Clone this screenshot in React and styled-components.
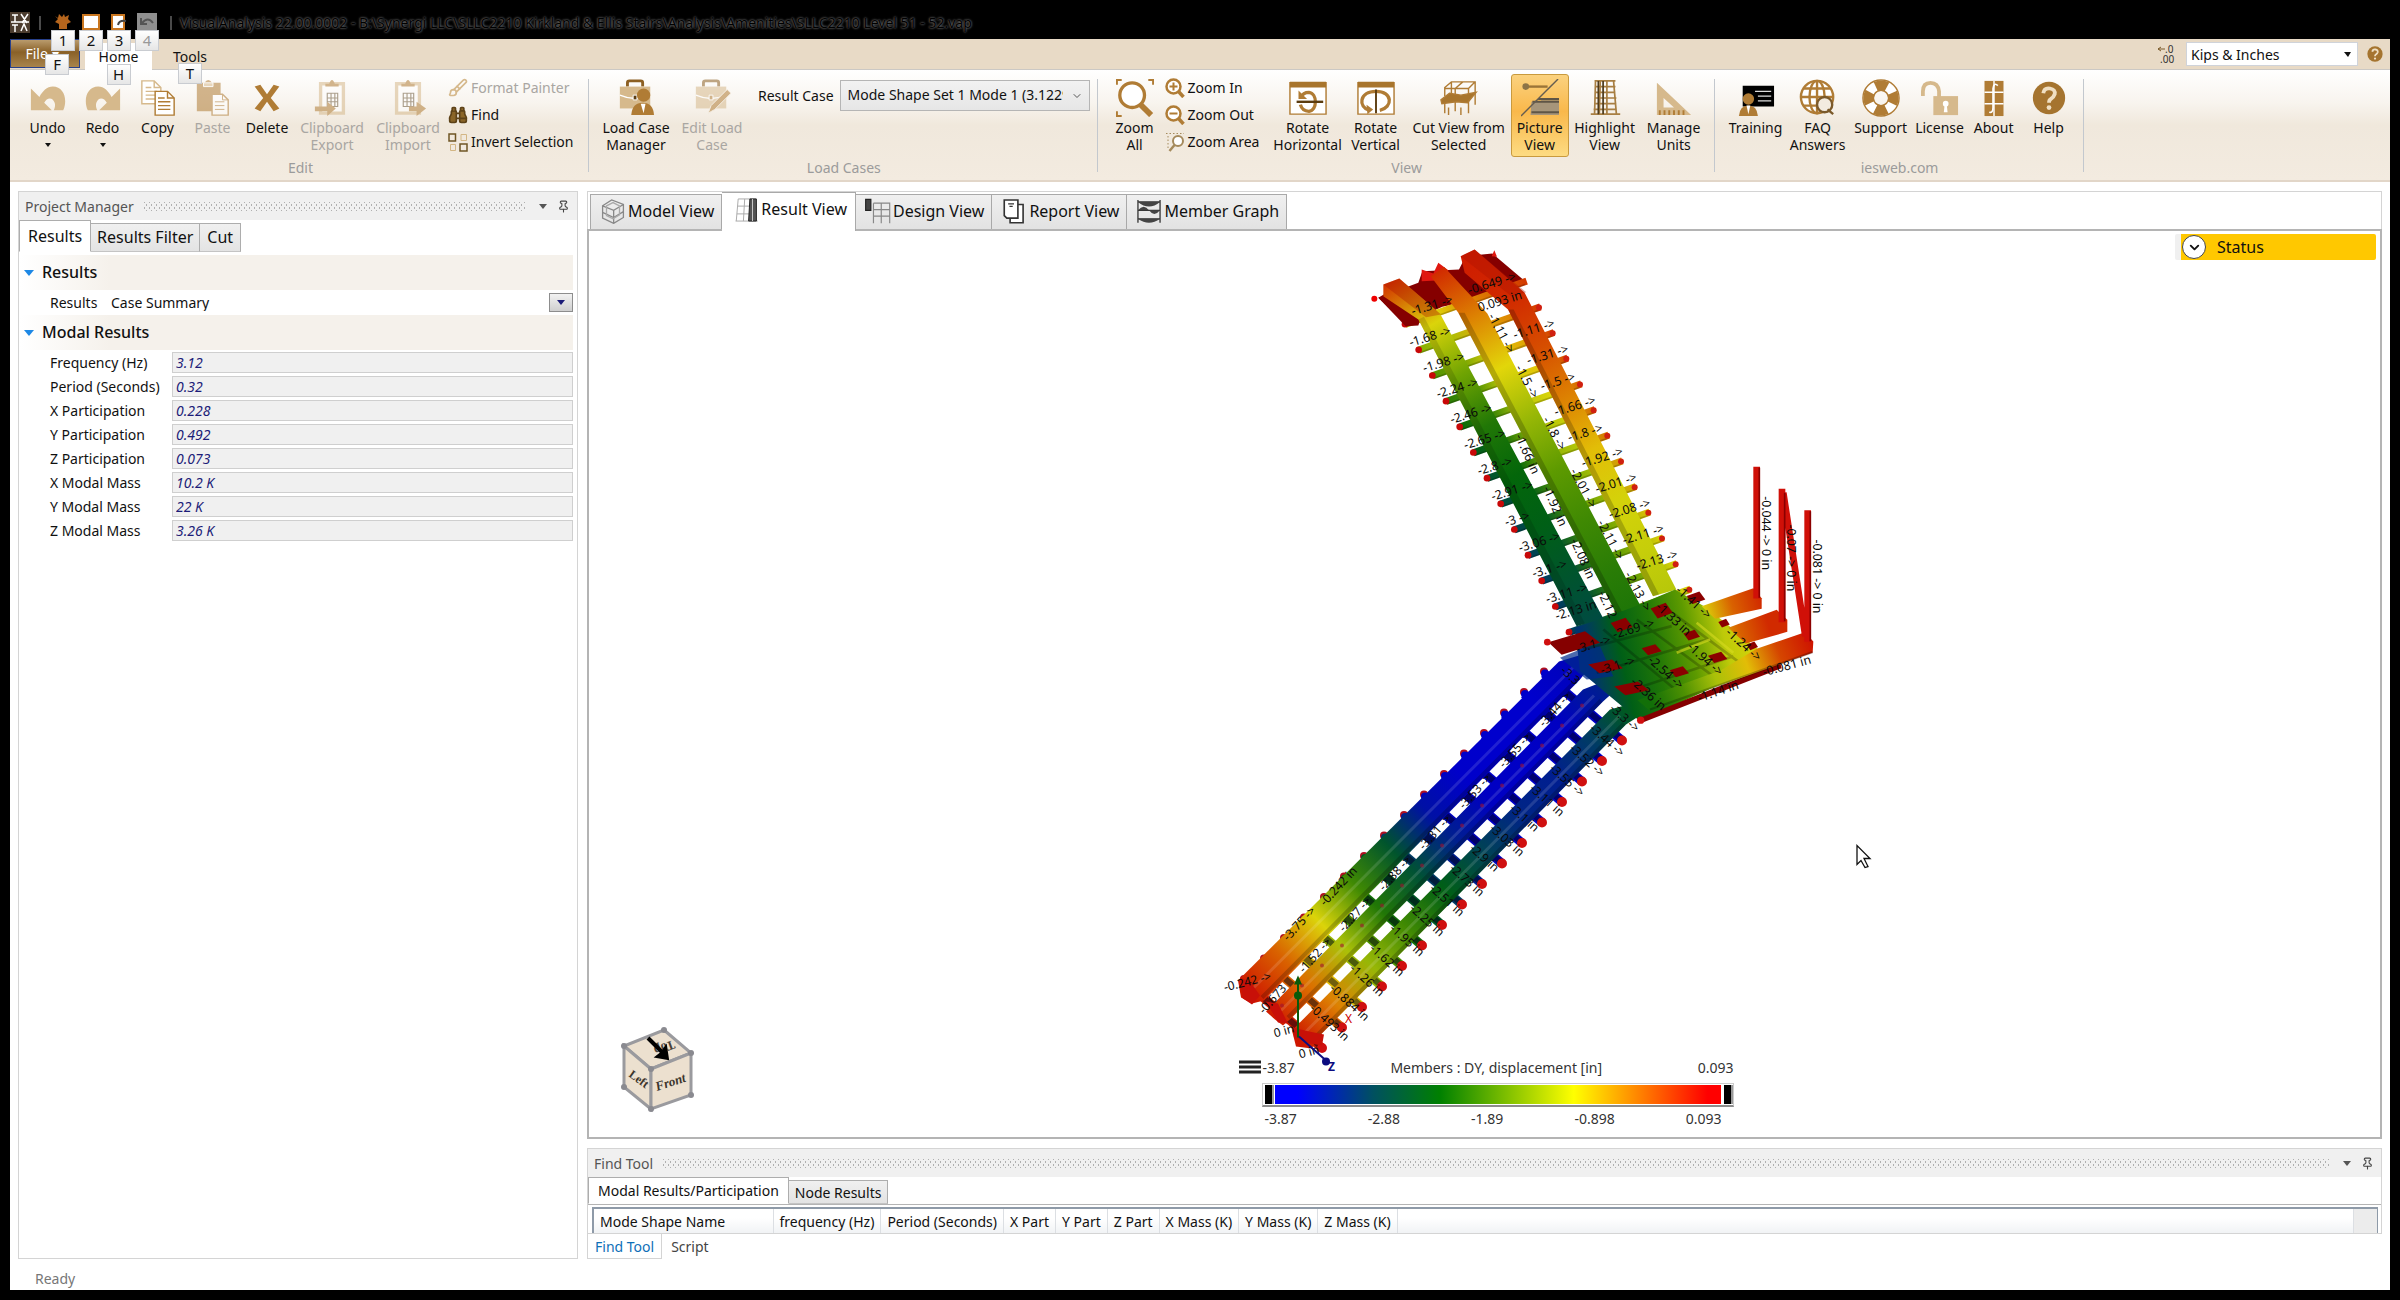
import React, { useState } from 'react'
import styled, { createGlobalStyle, css } from 'styled-components';
import { Binoculars, Brush, ChevronDown, Pin } from 'lucide-react';

const GlobalStyle = createGlobalStyle`
  * { box-sizing: border-box; }
  body { margin: 0; background: #000; }
  body, button, select, input, table {
    font-family: "Noto Sans", "Open Sans", sans-serif;
    font-size: 14px;
    line-height: 17px;
    color: #111;
  }
  button, select, input { margin: 0; padding: 0; border: 0; background: none; }
  svg { display: block; flex: none; }
`

/* ---------- window frame ---------- */

const Window = styled.div`
  display: flex;
  flex-direction: column;
  min-height: 100vh;
  padding: 0 10px 10px;
  background: #000;
`
const TitleBar = styled.header`
  display: flex;
  align-items: center;
  height: 39px;
  padding-top: 6px;
`
const TitleText = styled.h1`
  margin: 0;
  font-size: 14px;
  font-weight: 400;
  line-height: 24px;
  color: #000;
  text-shadow: 0 0 2px #8a8a8a, 0 0 3px #555;
  white-space: nowrap;
`
const Divider = styled.span`
  width: 2px;
  height: 14px;
  margin: 0 8px 0 9px;
  background: #4a4a4a;
`
const QuickAccess = styled.div`
  display: flex;
  align-self: flex-start;
  padding-top: 5px;
`
const QuickButton = styled.button`
  position: relative;
  display: flex;
  justify-content: center;
  width: 28px;
  height: 20px;
  padding-top: 2px;
`
const KeyTip = styled.kbd`
  position: absolute;
  z-index: 5;
  top: ${p => p.$top}px;
  left: ${p => (p.$right ? 68 : 50)}%;
  width: 24px;
  height: 21px;
  margin-left: -12px;
  border: 1px solid #c9ccd1;
  background: linear-gradient(#fff, #e6e6e6);
  color: ${p => (p.$dim ? '#999' : '#111')};
  font: 15px/19px "Noto Sans", sans-serif;
  text-align: center;
`

/* ---------- ribbon ---------- */

const TabStrip = styled.nav`
  display: flex;
  align-items: flex-end;
  height: 31px;
  background: #e8dac6;
  border-bottom: 1px solid #cbc8c4;
`
const FileTab = styled.button`
  position: relative;
  align-self: flex-start;
  width: 70px;
  height: 29px;
  padding-right: 6px;
  border: 1px solid #27408b;
  background: linear-gradient(#b99b6d, #8a6128 45%, #a8844c);
  color: #fff;
`
const RibbonTab = styled.button`
  position: relative;
  height: ${p => (p.$active ? 27 : 26)}px;
  margin-left: ${p => (p.$active ? 5 : 0)}px;
  margin-bottom: ${p => (p.$active ? -1 : 0)}px;
  width: ${p => (p.$active ? 67 : 76)}px;
  background: ${p => (p.$active ? '#fff' : 'transparent')};
`
const UnitTools = styled.div`
  display: flex;
  align-items: center;
  align-self: center;
  gap: 8px;
  margin-left: auto;
  padding-right: 6px;
`
const SelectBox = styled.div`
  position: relative;
  display: flex;
  align-items: center;
  width: ${p => p.$width}px;
  height: ${p => p.$height}px;
  border: 1px solid ${p => (p.$filled ? '#b5b5b5' : '#cfd3da')};
  background: ${p => (p.$filled ? 'linear-gradient(#f2f2f2, #e6e6e6)' : '#fff')};
  select {
    appearance: none;
    width: calc(100% - ${p => (p.$filled ? 26 : 20)}px);
    height: 100%;
    padding: 0 0 ${p => (p.$filled ? 3 : 0)}px ${p => (p.$filled ? 7 : 4)}px;
    overflow: hidden;
    white-space: nowrap;
    text-overflow: clip;
  }
  svg { position: absolute; right: 6px; pointer-events: none; }
`
const RibbonBody = styled.section`
  display: flex;
  height: 112px;
  background: linear-gradient(#fff, #f8f4ee 30%, #f0e8dc 50%, #f3ebe0);
  border-bottom: 2px solid #e2d6c8;
`
const Group = styled.div`
  position: relative;
  display: flex;
  flex-direction: column;
  padding: 4px 8px 0 ${p => (p.$first ? 10 : 9)}px;
  &::after {
    content: '';
    position: absolute;
    top: 9px;
    bottom: 8px;
    right: 0;
    width: 1px;
    background: #c3c8ce;
  }
`
const GroupRow = styled.div`
  display: flex;
  height: 83px;
`
const GroupCaption = styled.div`
  text-align: center;
  line-height: 22px;
  color: #9b9b9b;
`
const BigButton = styled.button`
  display: flex;
  flex-direction: column;
  align-items: center;
  gap: 2px;
  width: ${p => p.$width}px;
  height: 83px;
  padding-top: 4px;
  border: 1px solid transparent;
  white-space: pre;
  color: ${p => (p.disabled ? '#a9a6a2' : '#111')};
  svg { opacity: ${p => (p.disabled ? 0.55 : 1)}; }
  ${p => p.$on && css`
    border-color: #c99a3e;
    border-radius: 3px;
    background: linear-gradient(#fbd27f, #f9b84b 45%, #fddb82);
  `}
`
const SmallStack = styled.div`
  display: flex;
  flex-direction: column;
  width: ${p => p.$width}px;
  padding-left: 2px;
`
const SmallButton = styled.button`
  display: flex;
  align-items: center;
  gap: 3px;
  height: 27px;
  white-space: nowrap;
  color: ${p => (p.disabled ? '#a9a6a2' : '#111')};
`
const ResultCase = styled.label`
  display: flex;
  align-items: center;
  align-self: flex-start;
  gap: 6px;
  margin-top: 6px;
  padding-left: 8px;
  white-space: nowrap;
`
const Caret = styled.i`
  width: 0;
  border: ${p => p.$size || 3}px solid transparent;
  border-top-width: ${p => (p.$size || 3) + 1}px;
  border-top-color: ${p => p.$color || '#111'};
  border-bottom: 0;
  ${BigButton} & { margin-top: 5px; }
`

/* ---------- docking area ---------- */

const Workspace = styled.main`
  display: flex;
  flex: 1;
  gap: 9px;
  padding: 9px 8px 0;
  background: #fff;
`
const SidePanel = styled.aside`
  flex: none;
  width: 560px;
  border: 1px solid #d4d4d4;
`
const PanelHeader = styled.div`
  display: flex;
  align-items: center;
  gap: 10px;
  height: 28px;
  padding: 0 7px 0 6px;
  background: #f0f0f0;
  color: #555;
`
const Grip = styled.span`
  flex: 1;
  height: 9px;
  margin-right: 4px;
  background-image:
    radial-gradient(circle, #b0b0b0 1px, transparent 1px),
    radial-gradient(circle, #b0b0b0 1px, transparent 1px);
  background-size: 5px 6px;
  background-position: 0 0, 3px 3px;
`
const SideTabs = styled.div`
  display: flex;
  align-items: flex-end;
  height: ${p => p.$height}px;
`
const PanelTab = styled.button`
  height: ${p => (p.$active ? '100%' : 'calc(100% - 3px)')};
  padding: 0 ${p => p.$pad}px;
  border: 1px solid #adadad;
  border-bottom-color: ${p => (p.$active ? 'transparent' : '#c4c4c4')};
  border-left-width: ${p => (p.$active ? 1 : 0)}px;
  background: ${p => (p.$active ? '#fff' : 'linear-gradient(#f0f0f0, #e3e3e3)')};
  font-size: ${p => p.$size}px;
`
const Sections = styled.div`
  padding-top: 3px;
`
const SectionTitle = styled.h2`
  display: flex;
  align-items: center;
  gap: 8px;
  height: 35px;
  margin: 0 4px 0 1px;
  padding-left: 4px;
  background: linear-gradient(90deg, #fff, #f5f1eb 90px);
  font-size: 16px;
  font-weight: 500;
`
const CaseRow = styled.label`
  display: flex;
  align-items: center;
  height: 25px;
  padding: 0 4px 0 31px;
  span { width: 57px; }
`
const CaseSelect = styled.div`
  position: relative;
  display: flex;
  align-items: center;
  flex: 1;
  select { appearance: none; width: 100%; padding-left: 4px; }
`
const DropBox = styled.i`
  position: absolute;
  right: 0;
  display: grid;
  place-items: center;
  width: 24px;
  height: 19px;
  border: 1px solid #8d8d8d;
  background: linear-gradient(#f2f2f2, #cfcfcf);
  pointer-events: none;
`
const PropertyRow = styled.label`
  display: flex;
  align-items: center;
  height: 24px;
  padding: 0 4px 0 31px;
  span { flex: none; width: 122px; }
  input {
    flex: 1;
    height: 21px;
    padding-left: 3px;
    border: 1px solid #cfcfcf;
    background: #f0f0f0;
    color: #1c1c78;
    font-style: italic;
  }
`
const DocColumn = styled.div`
  display: flex;
  flex: 1;
  flex-direction: column;
  min-width: 0;
`
const DocTabs = styled.div`
  display: flex;
  align-items: flex-end;
  height: 38px;
  padding-left: 2px;
  border: 1px solid #d4d4d4;
  border-bottom: 0;
`
const DocTab = styled.button`
  position: relative;
  z-index: ${p => (p.$active ? 1 : 0)};
  display: flex;
  align-items: center;
  gap: 2px;
  height: ${p => (p.$active ? 39 : 35)}px;
  margin-bottom: ${p => (p.$active ? -2 : 0)}px;
  padding: ${p => (p.$active ? '0 8px 5px 11px' : '0 7px 2px 9px')};
  border: 1px solid #a9a9a9;
  border-bottom: 0;
  border-left-width: ${p => (p.$first ? 1 : 0)}px;
  background: ${p => (p.$active ? '#fff' : 'linear-gradient(#f0f0f0, #e2e2e2)')};
  font-size: 16px;
  white-space: nowrap;
`
const Viewport = styled.div`
  position: relative;
  flex: 1;
  min-height: 600px;
  border: 2px solid #b4b4b4;
  background: #fff;
`
const ModelSvg = styled.svg`
  position: absolute;
  inset: 0;
  width: 100%;
  height: 100%;
`
const CubeSvg = styled.svg`
  position: absolute;
  left: 30px;
  bottom: 24px;
`
const StatusButton = styled.button`
  position: absolute;
  top: 3px;
  right: 4px;
  display: flex;
  align-items: center;
  gap: 11px;
  width: 201px;
  height: 26px;
  border-left: 6px solid #f0f0f0;
  border-radius: 2px;
  background: #ffc800;
  font-size: 16px;
`
const RoundIcon = styled.span`
  display: grid;
  place-items: center;
  width: 24px;
  height: 24px;
  margin-left: 1px;
  border: 1px solid #444;
  border-radius: 50%;
  background: #fff;
`
const Legend = styled.figure`
  position: absolute;
  bottom: 8px;
  left: 50%;
  width: 496px;
  margin: 0 0 0 -247px;
`
const LegendRow = styled.div`
  display: flex;
  align-items: center;
  justify-content: space-between;
  height: 22px;
  padding: ${p => (p.$ticks ? '0 12px 0 27px' : '0 0 0 1px')};
  color: #333;
`
const Range = styled.span`
  display: flex;
  align-items: center;
  gap: 2px;
`
const LegendBar = styled.div`
  display: flex;
  align-items: stretch;
  gap: 3px;
  height: 24px;
  margin: 5px 0 0 24px;
  padding: 1px 2px;
  border: 1px solid #ccc;
  border-bottom: 2px solid #8d8d8d;
  i { width: 7px; background: #000; box-shadow: 2px 0 0 #999; }
  div {
    flex: 1;
    background: linear-gradient(90deg, #00f 5%, #005060 22%, #008000 37%, #ff0 67%, #ff8000 82%, #f00 97%);
  }
`
const FindPanel = styled.section`
  margin-top: 9px;
`
const FindBox = styled.div`
  border: 1px solid #d4d4d4;
`
const GridFrame = styled.div`
  height: 29px;
  padding: 2px 3px 0 4px;
  border-top: 1px solid #b4b4b4;
`
const ModeTable = styled.table`
  width: 100%;
  height: 26px;
  border: 1px solid #8e9aa8;
  border-width: 2px 1px 0 2px;
  border-collapse: collapse;
  background: linear-gradient(#fff 40%, #f1f3f5);
  th {
    padding: 0 6px;
    border-right: 1px solid #dcdfe3;
    font-weight: 400;
    text-align: left;
    white-space: nowrap;
  }
  th:first-child { min-width: 180px; }
  th:nth-last-child(2) { width: 100%; }
  th:last-child { min-width: 24px; border: 0; background: #ececec; }
`
const BottomTab = styled.button`
  height: 25px;
  padding: 0 ${p => (p.$active ? 7 : 8)}px;
  border: 1px solid ${p => (p.$active ? '#d4d4d4' : 'transparent')};
  border-top: 0;
  color: ${p => (p.$active ? '#0e6fb8' : '#444')};
`
const StatusBar = styled.footer`
  height: 31px;
  padding: 11px 0 0 25px;
  background: #fff;
  color: #777;
`

/* ---------- icons ---------- */

const gold = '#b07c35'
const tan = '#d6b98c'

const Icon = ({ size = 40, children }) => (
  <svg width={size} height={size} viewBox="0 0 40 40" fill="none" aria-hidden="true">{children}</svg>
)

const icons = {
  undo: <path d="M2 10v23h22l-8-8c3-6 9-6 11 0 1 3 0 6-1 8h10c5-11 1-25-11-25-6 0-11 5-14 11z" fill={tan} />,
  redo: <path d="M38 10v23H16l8-8c-3-6-9-6-11 0-1 3 0 6 1 8H4C-1 22 3 8 15 8c6 0 11 5 14 11z" fill={tan} />,
  copy: (
    <g stroke={gold} strokeWidth="1.5">
      <path d="M3 2h13l7 7v17H3z" fill="#fff" stroke={tan} /><path d="M16 2v7h7M7 9h6M7 13h12M7 17h12M7 21h12" stroke={tan} />
      <path d="M17 13h13l7 7v18H17z" fill="#fff" /><path d="M30 13v7h7M20 20h7M20 24h13M20 28h13M20 32h13" />
    </g>
  ),
  paste: (
    <g>
      <path d="M3 4h8q4-6 8 0h9v30H3z" fill={gold} /><path d="M10 4h10v4H10z" fill={tan} stroke="#fff" />
      <path d="M19 16h11l6 6v16H19z" fill="#fff" stroke={gold} strokeWidth="1.5" /><path d="M30 16v6h6M22 24h10M22 28h10M22 32h10" stroke={gold} />
    </g>
  ),
  delete: <path d="M7 8l6-2 7 10 7-10 6 2-9 12 9 11-6 3-7-10-7 10-6-3 9-11z" fill={gold} />,
  clip: (
    <g>
      <path d="M8 5h24v31H8z" fill="#fff" stroke={tan} strokeWidth="3.5" /><path d="M13 8V5h4q3-8 6 0h4v3z" fill={gold} />
      <path d="M15 15h11v14H15zM19 15v14M23 15v14M15 20h11M15 24h11" stroke="#6d5a3c" strokeWidth="1.2" />
    </g>
  ),
  arrowL: <path d="M2 29h13v-5l9 7-9 8v-5H2z" fill={gold} />,
  arrowR: <path d="M21 29h8v-5l10 7-10 8v-5h-8z" fill={gold} />,
  caseMgr: (
    <g>
      <path d="M11 8V4q0-2 2-2h12q2 0 2 2v4" stroke="#8c5f22" strokeWidth="3" /><path d="M3 8h32v23H3z" fill={tan} />
      <path d="M3 17q16 7 32 0" stroke="#fff" strokeWidth="1.5" /><path d="M17 17h4v5h-4z" fill="#5d3d10" stroke="#fff" />
      <circle cx="28" cy="17" r="7" fill={gold} /><path d="M15 38q1-13 12-13t12 13z" fill={gold} /><path d="M25 26h5l-2 10z" fill="#fff" />
    </g>
  ),
  editCase: (
    <g>
      <path d="M11 8V4q0-2 2-2h12q2 0 2 2v4" stroke="#8c5f22" strokeWidth="3" /><path d="M3 8h32v23H3z" fill={tan} />
      <path d="M3 17q16 7 32 0" stroke="#fff" strokeWidth="1.5" /><path d="M17 17h4v5h-4z" fill={gold} stroke="#fff" />
      <path d="M16 36l3-8 17-17 4 4-17 17z" fill={gold} stroke="#f4ede2" />
    </g>
  ),
  zoomAll: (
    <g stroke={gold}>
      <path d="M1 6V1h5M34 1h5v5M1 34v5h5" strokeWidth="2" /><circle cx="17" cy="17" r="13" fill="#fff" strokeWidth="3.5" />
      <path d="M26 27l11 11" strokeWidth="6" />
    </g>
  ),
  rotateH: (
    <g>
      <path d="M1 4h38v33H1z" fill="#fff" stroke={gold} strokeWidth="1.5" /><path d="M1 3h38v6H1z" fill="#a8752d" />
      <path d="M12 27q2 7 9 7c9-1 9-19 0-20-4 0-7 2-8 5" stroke={gold} strokeWidth="3.5" /><path d="M10 12v9h9z" fill={gold} />
      <path d="M8 24h28" stroke="#5b3c10" strokeWidth="2.5" />
    </g>
  ),
  rotateV: (
    <g>
      <path d="M1 4h38v33H1z" fill="#fff" stroke={gold} strokeWidth="1.5" /><path d="M1 3h38v6H1z" fill="#a8752d" />
      <path d="M24 33c14-3 14-20-4-20S1 30 13 33" stroke={gold} strokeWidth="3.5" /><path d="M10 27l7 5-6 5z" fill={gold} />
      <path d="M20 11v25" stroke="#5b3c10" strokeWidth="2" />
    </g>
  ),
  cut: (
    <g stroke={gold} strokeWidth="1.5">
      <path d="M5 18V9l7-6h25v24M5 10h25v26M12 3v16M24 3l-8 7v24M37 3l-7 7M5 22v14M9 30v8M22 30v8" />
      <path d="M1 22l9-7 12 2 16-3-9 11-12-1-15 2z" fill="#a8752d" />
    </g>
  ),
  picture: (
    <g>
      <path d="M3 8h25" stroke="#9a7438" strokeWidth="2.5" /><circle cx="5" cy="8" r="3.5" fill="#8d7446" />
      <path d="M22 20h18v3H21zM11 24h29v14H10z" fill="#a6957a" /><path d="M18 21h22M12 24h28M11 35h29" stroke="#5f5546" strokeWidth="2" />
      <path d="M0 39L39 0" stroke="#655d50" strokeWidth="1.5" />
    </g>
  ),
  highlight: (
    <g stroke="#a87f43" strokeWidth="1.8">
      <path d="M10 2l-1 35M15 2l-1 35M22 2v35M29 2l3 35M9 2h22M9 8h22M9 14h22M9 20h23M9 26h23M8 32h24M5 37h31" /><path d="M13 2v35M18 2v35" stroke="#4d3a1c" />
    </g>
  ),
  units: (
    <g>
      <path d="M2 4l36 34H2zM9 20v10h11z" fill={tan} fillRule="evenodd" /><path d="M5 38v-5M10 38v-5M15 38v-5M20 38v-5M25 38v-5M30 38v-5" stroke={gold} strokeWidth="2" />
    </g>
  ),
  training: (
    <g>
      <path d="M6 7h33v22H6z" fill="#000" /><path d="M19 13h17M22 18h14M22 23h14" stroke="#ddd" strokeWidth="1.5" />
      <circle cx="12" cy="21" r="6" fill={gold} /><path d="M2 39q1-11 10-11t10 11z" fill={gold} /><path d="M10 28h4l-2 9z" fill="#fff" />
    </g>
  ),
  faq: (
    <g stroke={gold} strokeWidth="2.5">
      <circle cx="19" cy="19" r="17" fill="#fff" /><ellipse cx="19" cy="19" rx="8" ry="17" /><path d="M2 19h34M5 10h28M5 28h28M19 2v34" />
      <circle cx="27" cy="27" r="8" fill="#f3ebe0" stroke="#7b5a2b" /><path d="M30 32l6 5" stroke="#7b5a2b" />
    </g>
  ),
  support: (
    <g>
      <circle cx="20" cy="20" r="13" stroke="#fff" strokeWidth="11" />
      <circle cx="20" cy="20" r="13" stroke={gold} strokeWidth="11" strokeDasharray="12 8.42" strokeDashoffset="6" />
      <circle cx="20" cy="20" r="19" stroke={gold} strokeWidth="1.5" /><circle cx="20" cy="20" r="8" stroke={gold} strokeWidth="1.5" />
    </g>
  ),
  license: (
    <g>
      <path d="M2 18v-5q0-9 8-9t9 9v7" stroke={tan} strokeWidth="4" /><path d="M13 18h26v20H13z" fill={tan} />
      <circle cx="26" cy="26" r="3" fill="#fff" /><path d="M25 26h2l1 9h-4z" fill="#fff" />
    </g>
  ),
  about: (
    <g>
      <path d="M10 2h20v37H10z" fill={gold} /><path d="M10 14h20M10 26h20M20 2v37" stroke="#fff" strokeWidth="1.5" />
      <path d="M24 7q-4-4-5 3v20q0 6-4 5" stroke="#fff" strokeWidth="1.8" />
    </g>
  ),
  help: (
    <g>
      <circle cx="20" cy="20" r="17" fill="#a5742f" /><path d="M14 15q1-6 7-5 6 1 5 6-1 3-4 5-2 1-2 4" stroke="#f0dfc2" strokeWidth="4" />
      <circle cx="20" cy="30" r="2.5" fill="#f0dfc2" />
    </g>
  ),
  zoomIn: <g stroke={gold}><circle cx="17" cy="17" r="14" strokeWidth="5" fill="#fff" /><path d="M27 27l10 11" strokeWidth="7" /><path d="M9 17h16M17 9v16" strokeWidth="4" /></g>,
  zoomOut: <g stroke={gold}><circle cx="17" cy="17" r="14" strokeWidth="5" fill="#fff" /><path d="M27 27l10 11" strokeWidth="7" /><path d="M9 17h16" strokeWidth="4" /></g>,
  zoomArea: <g stroke="#a58a5c"><circle cx="26" cy="18" r="10" strokeWidth="4" fill="#fff" /><path d="M19 26L9 38" strokeWidth="5" /><path d="M2 3h36M6 8v26" strokeWidth="2" strokeDasharray="3 4" /></g>,
  invert: (
    <g strokeWidth="3">
      <path d="M2 4h13v14H2zM24 24h14v14H24z" stroke="#6f5524" /><path d="M26 5h11v12H26zM5 25h10v12H5z" stroke="#d3b684" strokeWidth="2" />
    </g>
  ),
}

const clipExport = <>{icons.clip}{icons.arrowL}</>
const clipImport = <>{icons.clip}{icons.arrowR}</>

const docIcons = {
  model: <g stroke="#888" strokeWidth="2"><path d="M4 12l14-9 18 7v20l-15 9-17-8zM4 12l17 7 15-9M21 19v20M4 22l17 8 15-9" /><path d="M10 12l10-5 10 5v14l-10 6-10-5z" stroke="#aaa" /></g>,
  result: <g stroke="#666" strokeWidth="1.5"><path d="M8 3h27M4 37h34M8 3L5 37M18 3l-2 34M7 14h18M6 26h19" stroke="#aaa" /><path d="M26 3h10v34H24z" fill="#555" stroke="#222" /><path d="M30 3v34" stroke="#ccc" /></g>,
  design: <g stroke="#888" strokeWidth="1.8"><path d="M1 2h8v17H1z" fill="#444" stroke="#222" /><path d="M13 8h25v31M13 8v31M25 8v31M13 18h25M13 28h25" /></g>,
  report: <g stroke="#333" strokeWidth="2.5"><path d="M16 10h18v28H14v-6" fill="#fff" /><path d="M5 3h21v28H9l-4-4z" fill="#fff" /><path d="M11 9h9M13 13h5" strokeWidth="1.8" /></g>,
  graph: <g stroke="#333" strokeWidth="2"><path d="M3 3v35M37 3v35M3 6h34M3 19h34M3 32h34" /><path d="M3 6q17 14 34 0zM3 19q9-11 17 0t17 0zM3 32q17 12 34 0z" fill="#444" stroke="none" /></g>,
}

/* ---------- displacement colours ---------- */

const stops = [
  [0, 0, 0, 205], [0.09, 0, 0, 190], [0.2, 0, 62, 95], [0.34, 0, 100, 10],
  [0.5, 95, 155, 0], [0.63, 195, 205, 10], [0.69, 228, 215, 10], [0.82, 220, 115, 0], [1, 205, 15, 0],
]
const colorOf = v => {
  const p = Math.min(1, Math.max(0, (v + 3.87) / 3.963))
  const i = Math.max(1, stops.findIndex(s => s[0] >= p))
  const a = stops[i - 1], b = stops[i]
  const t = (p - a[0]) / (b[0] - a[0])
  return `rgb(${[1, 2, 3].map(k => Math.round(a[k] + (b[k] - a[k]) * t)).join(',')})`
}

const Ramp = ({ id, from, to, values }) => (
  <linearGradient id={id} gradientUnits="userSpaceOnUse" x1={from[0]} y1={from[1]} x2={to[0]} y2={to[1]}>
    {values.map((v, i) => <stop key={i} offset={i / (values.length - 1)} stopColor={colorOf(v)} />)}
  </linearGradient>
)

const Label = ({ x, y, r = 0, children }) => <text transform={`translate(${x} ${y}) rotate(${r})`}>{children}</text>

const leftValues = ['-1.31', '-1.68', '-1.98', '-2.24', '-2.46', '-2.65', '-2.8', '-2.91', '-3', '-3.06', '-3.1', '-3.11', '-3.1']
const rightValues = ['-0.649', '-0.9', '-1.11', '-1.31', '-1.5', '-1.66', '-1.8', '-1.92', '-2.01', '-2.08', '-2.11', '-2.13', '-1.9']
const rightShade = [-0.2, -0.15, -0.2, -0.25, -0.45, -0.5, -0.6, -0.8, -0.9, -1, -1.1, -1.15, -1.2]

// dark plates lying in the landing: cx, cy, width, height
const plates = [
  [965, 1145, 66, 50], [845, 1188, 66, 46], [1068, 1106, 56, 40], [1152, 1182, 34, 28], [1055, 1218, 50, 34],
  [1237, 1250, 34, 28], [935, 1262, 60, 36], [1133, 1285, 58, 36], [1018, 1328, 58, 36], [797, 1312, 104, 44], [875, 1378, 104, 44],
]

// drawn at three units to a pixel
const UpperFlight = () => (
  <g transform="translate(1340 230) scale(0.33333)" fontSize="37">
    <defs>
      <Ramp id="u1" from={[150, 160]} to={[760, 1200]} values={[-0.2, -1.2, -1.8, -2.3, -2.5, -2.6, -2.75, -2.9]} />
      <Ramp id="u2" from={[300, 120]} to={[900, 1180]} values={[-0.1, -0.7, -1.15, -1.6, -1.9, -2.1, -2.25, -2.35]} />
      <Ramp id="u3" from={[390, 80]} to={[990, 1120]} values={[0, -0.1, -0.35, -0.7, -1, -1.25, -1.35, -1.45]} />
      <Ramp id="deck" from={[740, 1290]} to={[1250, 1180]} values={[-3.15, -2.6, -2.3, -1.9, -1.4, -1.2]} />
      <Ramp id="armA" from={[1090, 1150]} to={[1260, 1100]} values={[-1.2, -0.5, -0.1]} />
      <Ramp id="armB" from={[940, 1430]} to={[1415, 1240]} values={[-2.4, -2, -1.5, -1, -0.3, 0.05]} />
      {leftValues.map((v, n) => (
        <Ramp key={n} id={`rung${n}`} from={[195 + 41 * n, 285 + 77 * n]} to={[560 + 41 * n, 155 + 77 * n]}
          values={[Number(v), Number(v) * 0.9, (Number(v) + rightShade[n]) / 2, Number(rightValues[n]) * 0.8, rightShade[n]]} />
      ))}
    </defs>
    <path d="M115 205l120-45 12-35 110-5 20-40 80-8 100 85-90 40-160 35-110 50z" fill="#850000" />
    <path d="M245 155v-35l35 12 15-32 30 22-20 30zM455 80l8-18 8 20z" fill="#e01810" />
    {leftValues.map((v, n) => (
      <g key={n}>
        <path d={`M${195 + 41 * n} ${285 + 77 * n}l365 -130`} stroke={`url(#rung${n})`} strokeWidth="21" />
        <path d={`M${200 + 41 * n} ${292 + 77 * n}l355 -127`} stroke="#000" strokeOpacity="0.2" strokeWidth="5" />
        <circle cx={195 + 41 * n} cy={284 + 77 * n} r="10" fill="#c80808" />
        {n > 0 && <circle cx={556 + 41 * n} cy={157 + 77 * n} r="9" fill="#d02010" />}
      </g>
    ))}
    <circle cx="103" cy="208" r="9" fill="#e00" />
    <path d="M115 205l20-12 110 65-10 30-38 2z" fill="#850000" />
    <path d="M130 165l48-18 122 105 490 915-80 23L235 270 130 200z" fill="url(#u1)" />
    <path d="M252 262l483 920-25 8L235 270z" fill="#000" opacity="0.13" />
    <path d="M272 140l40-28 130 140 490 935-90-10-487-927z" fill="url(#u2)" />
    <path d="M355 250l487 927 22 4-490-931z" fill="#000" opacity="0.2" />
    <path d="M362 80l42-20 150 130 455 890-70 20-435-860-130-110z" fill="url(#u3)" />
    <path d="M504 240l435 860 18-5-436-855z" fill="#000" opacity="0.2" />
    <path d="M178 147l125 108-45 8-128-98zM404 60l155 128-45 12-152-120z" fill="#a81000" opacity="0.35" />
    <path d="M705 1195l170-60 130-55 95 55 155 125-20 60-335 155-180-150z" fill="url(#deck)" />
    <path d="M660 1285l60-25 60-10 40 90-80 10z" fill="#002b8a" opacity="0.7" />
    <path d="M625 1238l110-33 45 35-115 36zM900 1465l420-167 5 18-415 162z" fill="#850000" />
    <g stroke="#000" strokeOpacity="0.22" strokeWidth="8">
      <path d="M730 1260l265-70M770 1330l330-100M850 1390l330-110M890 1170l270 200M970 1130l230 170M790 1200l240 200" />
    </g>
    <path d="M1070 1180l110 90M1110 1230l-100 40" stroke="#d8dc20" strokeWidth="8" opacity="0.6" />
    {plates.map(([x, y, w, h]) => (
      <path key={`${x}-${y}`} d={`M${x - w / 2} ${y - h / 6}l${w * 0.68} ${-h / 3}l${w * 0.32} ${h * 0.6}l${-w * 0.68} ${h / 3}z`} fill="#8b0000" />
    ))}
    <path d="M1085 1130l155-54 25 30v32l-140 30z" fill="url(#armA)" />
    <path d="M1165 1195l145-54 32 30v36l-125 35z" fill="url(#armA)" />
    <path d="M1250 1258l145-50 25 28-2 34-490 172 -35-30 250-90z" fill="url(#armB)" />
    <path d="M930 1440l488-172" stroke="#000" strokeOpacity="0.25" strokeWidth="7" />
    <g stroke="#d01008" strokeWidth="20">
      <path d="M1250 712v395M1326 778v400M1330 790l66 430M1403 842v395" />
      <path d="M1258 715v390M1334 790v385M1411 845v390" stroke="#8b0000" strokeWidth="5" />
    </g>
    <circle cx="902" cy="1472" r="11" fill="#d01010" />
    <circle cx="622" cy="1238" r="10" fill="#d01010" />
    {leftValues.slice(0, 12).map((v, n) => (
      <Label key={n} x={n ? 171 + 41 * n : 218} y={n ? 275 + 77 * n : 258} r={-17}>{`${v} ->`}</Label>
    ))}
    {rightValues.slice(2, 12).map((v, n) => (
      <Label key={n} x={524 + 41 * n} y={329 + 77 * n} r={-17}>{`${v} ->`}</Label>
    ))}
    {['-1.11', '-1.5', '-1.8', '-2.01', '-2.11', '-2.13'].map((v, n) => (
      <Label key={n} x={443 + 82 * n} y={260 + 155 * n} r={62}>{`${v} ->`}</Label>
    ))}
    {['-1.66 in', '-1.92 in', '-2.08 in', '-2.12'].map((v, n) => (
      <Label key={n} x={525 + 83 * n} y={620 + 157 * n} r={66}>{v}</Label>
    ))}
    <Label x={388} y={195} r={-17}>{'-0.649 ->'}</Label>
    <Label x={418} y={247} r={-17}>0.093 in</Label>
    <Label x={650} y={1172} r={-17}>-2.13 in</Label>
    <Label x={712} y={1272} r={-17}>{'-3.1 ->'}</Label>
    <Label x={823} y={1228} r={-17}>{'-2.69 ->'}</Label>
    <Label x={785} y={1335} r={-17}>{'-3.1 ->'}</Label>
    <Label x={1005} y={1085} r={42}>{'-1.41 ->'}</Label>
    <Label x={945} y={1135} r={42}>-1.33 in</Label>
    <Label x={1155} y={1212} r={42}>{'-1.24 ->'}</Label>
    <Label x={1040} y={1255} r={42}>{'-1.94 ->'}</Label>
    <Label x={922} y={1295} r={42}>{'-2.54 ->'}</Label>
    <Label x={870} y={1360} r={42}>-2.36 in</Label>
    <Label x={1078} y={1418} r={-19}>-1.14 in</Label>
    <Label x={1272} y={1340} r={-15}>-0.081 in</Label>
    <Label x={1265} y={800} r={90}>{'-0.044 -> 0 in'}</Label>
    <Label x={1341} y={885} r={90}>{'-0.07 -> 0 in'}</Label>
    <Label x={1420} y={930} r={90}>{'-0.081 -> 0 in'}</Label>
  </g>
)

const lowerRight = [
  '-3.3 ->', '-3.44 ->', '-3.52 ->', '-3.55 ->', '-3.11 in', '-3.1 in', '-3.03 in', '-2.9 in',
  '-2.73 in', '-2.51 in', '-2.25 in', '-1.95 in', '-1.62 in', '-1.26 in', '-0.884 in', '-0.493 in',
]
const lowerMid = ['-3.44 ->', '-3.55 ->', '-3.53 ->', '-3.31 ->', '-2.88 ->', '-2.27 ->', '-1.52 ->', '-0.673']

const LowerFlight = () => (
  <g fontSize="12">
    <defs>
      <Ramp id="l1" from={[1580, 675]} to={[1252, 1000]} values={[-3.5, -3.87, -3.87, -3.8, -3.4, -2.75, -2.1, -1.2, -0.5, 0.05]} />
      <Ramp id="l2" from={[1600, 690]} to={[1272, 1022]} values={[-3.3, -3.6, -3.7, -3.6, -3.3, -2.8, -2.3, -1.5, -0.6, 0.05]} />
      <Ramp id="l3" from={[1630, 705]} to={[1300, 1042]} values={[-2.6, -3.1, -3.3, -3.25, -3, -2.6, -2.1, -1.6, -0.7, 0.05]} />
    </defs>
    {lowerRight.map((v, n) => {
      const x = 1544 - 20 * n
      const y = 674 + 20 * n + n / 2
      const tone = colorOf([-3.8, -3.8, -3.8, -3.8, -3.8, -3.7, -3.5, -3.3, -3.1, -2.7, -2.4, -2, -1.6, -1, -0.5, 0][n])
      return (
        <g key={n}>
          <path d={`M${x} ${y}l78 67`} stroke={tone} strokeWidth="9" />
          <path d={`M${x + 8} ${y + 7}l68 58`} stroke="#001" strokeOpacity="0.5" strokeWidth="6" />
          <circle cx={x} cy={y - 2} r="4" fill="#b01020" />
          <circle cx={x + 1} cy={y} r="4" fill={tone} />
          <circle cx={x + 78} cy={y + 67} r="5" fill="#d01010" />
        </g>
      )
    })}
    <path d="M1559 662l20-6 12 10-11 14-316 321-12 3-11-6-3-17z" fill="url(#l1)" />
    <path d="M1583 690l18-7 12 10-10 9-311 316-9 8-8-6-9-8z" fill="url(#l2)" />
    <path d="M1610 710l22-6 8 12-14 9-310 315-4 9-16-2-4-16z" fill="url(#l3)" />
    <g stroke="#fff" strokeOpacity="0.13" strokeWidth="3">
      <path d="M1573 668L1250 992M1594 696L1276 1016M1620 716L1302 1036" />
    </g>
    <g stroke="#000" strokeOpacity="0.2" strokeWidth="4">
      <path d="M1578 679L1262 998M1601 701L1288 1018M1624 724L1313 1040" />
    </g>
    {lowerRight.map((v, n) => <circle key={n} cx={1582 - 20 * n} cy={706 + 20 * n} r="2" fill="#a01030" opacity="0.6" />)}
    <g fill="#c81008">
      <path d="M1240 978l10 4 10 14-8 9-9-6zM1266 1002l12 2 10 20-10-1zM1293 1028l16 4 15 3-2 11-12-2-16-6z" />
    </g>
    {lowerRight.map((v, n) => <Label key={n} x={1609 - 20 * n} y={710 + 20 * n} r={42}>{v}</Label>)}
    {lowerMid.map((v, n) => <Label key={n} x={1544 - 40 * n} y={728 + 41 * n} r={-48}>{v}</Label>)}
    <Label x={1560} y={672} r={42}>-3.3</Label>
    <Label x={1225} y={992} r={-14}>{'-0.242 ->'}</Label>
    <Label x={1288} y={942} r={-47}>{'-3.75 ->'}</Label>
    <Label x={1325} y={907} r={-47}>-0.242 in</Label>
    <Label x={1275} y={1038} r={-15}>0 in</Label>
    <Label x={1300} y={1059} r={-15}>0 in</Label>
    <path d="M1298 984v54" stroke="#0a5a0a" strokeWidth="2" />
    <path d="M1298 976l4 9h-8z" fill="#0a5a0a" />
    <circle cx="1298" cy="996" r="4" fill="#0a5a0a" />
    <path d="M1299 1037l27 24" stroke="#0c0c80" strokeWidth="2" />
    <circle cx="1326" cy="1062" r="4" fill="#0c0c80" />
    <text x="1328" y="1071" fill="#0c0c80" fontWeight="700">Z</text>
    <text x="1345" y="1023" fill="#c00">X</text>
  </g>
)

const Model = () => (
  <ModelSvg viewBox="589 232 1791 905" fontFamily="Noto Sans, sans-serif" fill="none" role="img" aria-label="Deformed stair frame">
    <g fill="#0a0a0a">
      <LowerFlight />
      <UpperFlight />
    </g>
    <path d="M1857 846v19l4-4 4 7 3-1-4-8h6z" fill="#fff" stroke="#111" strokeWidth="1.3" />
  </ModelSvg>
)

const ViewCube = () => (
  <CubeSvg width="76" height="88" viewBox="618 1025 76 88" fontFamily="Liberation Serif, serif" fontWeight="700" fontSize="13">
    <g fill="#ece0cf" stroke="#9a9a9e" strokeWidth="3">
      <path d="M663 1030l27 23-40 16-27-23z" />
      <path d="M623 1046l27 23v40l-27-22z" />
      <path d="M650 1069l40-16v42l-40 14z" />
    </g>
    <g fill="#8a8a90">
      {[[663, 1030], [690, 1053], [650, 1069], [623, 1046], [623, 1087], [650, 1109], [690, 1095]].map(([x, y]) => <circle key={`${x}${y}`} cx={x} cy={y} r="3" />)}
    </g>
    <text transform="translate(672 1040) rotate(160)" fontSize="13" fill="#4a4238">Top</text>
    <text transform="translate(627 1076) rotate(36)" fontSize="12" fill="#3c352c">Left</text>
    <text transform="translate(656 1091) rotate(-18)" fontSize="13" fontStyle="italic" fill="#3c352c">Front</text>
    <path d="M647 1038l14 14" stroke="#000" strokeWidth="4" />
    <path d="M667 1059l-12-2 5-4 5-7z" fill="#000" stroke="#000" strokeWidth="2" />
  </CubeSvg>
)

/* ---------- page parts ---------- */

const properties = [
  ['Frequency (Hz)', '3.12'], ['Period (Seconds)', '0.32'], ['X Participation', '0.228'], ['Y Participation', '0.492'],
  ['Z Participation', '0.073'], ['X Modal Mass', '10.2 K'], ['Y Modal Mass', '22 K'], ['Z Modal Mass', '3.26 K'],
]

const docTabs = [
  ['Model View', docIcons.model], ['Result View', docIcons.result], ['Design View', docIcons.design],
  ['Report View', docIcons.report], ['Member Graph', docIcons.graph],
]

const columns = ['Mode Shape Name', 'frequency (Hz)', 'Period (Seconds)', 'X Part', 'Y Part', 'Z Part', 'X Mass (K)', 'Y Mass (K)', 'Z Mass (K)']

const Big = ({ icon, label, width, caret, on, disabled }) => (
  <BigButton $width={width} $on={on} disabled={disabled}>
    <Icon size={38}>{icon}</Icon>
    <span>{label}</span>
    {caret && <Caret />}
  </BigButton>
)

const Title = () => (
  <TitleBar>
    <svg width="20" height="21" viewBox="0 0 20 21">
      <path d="M0 0h20v21H0z" fill="#4b3c2e" />
      <path d="M2 3h6M5 3v7M2 13h6M5 13v7M11 2l6 9M18 2l-6 9M11 19l3-7 3 7M1 10h18" stroke="#fff" strokeWidth="1.5" fill="none" />
    </svg>
    <Divider />
    <QuickAccess>
      <QuickButton aria-label="New">
        <svg width="18" height="18" viewBox="0 0 18 18"><path d="M1 3l3 2 1-4 3 3 2-3 1 3 4-2-1 4 3 3-4 2v5H5v-5L1 9l3-3z" fill="#b5651d" /></svg>
        <KeyTip $top={19}>1</KeyTip>
      </QuickButton>
      <QuickButton aria-label="Open">
        <svg width="18" height="18" viewBox="0 0 18 18"><path d="M1 2h16v14H1z" fill="#fff" stroke="#c9761f" strokeWidth="2" /></svg>
        <KeyTip $top={19}>2</KeyTip>
      </QuickButton>
      <QuickButton aria-label="Save">
        <svg width="18" height="18" viewBox="0 0 18 18"><path d="M2 2h12v14H2z" fill="#fff" stroke="#c9761f" strokeWidth="2" /><path d="M8 12q1-5 8-4" stroke="#444" strokeWidth="2" fill="none" /></svg>
        <KeyTip $top={19}>3</KeyTip>
      </QuickButton>
      <QuickButton aria-label="Undo">
        <svg width="20" height="18" viewBox="0 0 20 18"><path d="M0 0h20v18H0z" fill="#8f8f8f" /><path d="M4 5v6h6M5 10q6-7 11 0" stroke="#555" strokeWidth="2" fill="none" /></svg>
        <KeyTip $top={19} $dim>4</KeyTip>
      </QuickButton>
    </QuickAccess>
    <Divider />
    <TitleText>VisualAnalysis 22.00.0002 - B:\Synergi LLC\SLLC2210 Kirkland &amp; Ellis Stairs\Analysis\Amenities\SLLC2210 Level 51 - 52.vap</TitleText>
  </TitleBar>
)

const Ribbon = () => (
  <>
    <TabStrip>
      <FileTab>File ▾<KeyTip $top={14} $right>F</KeyTip></FileTab>
      <RibbonTab $active>Home<KeyTip $top={21}>H</KeyTip></RibbonTab>
      <RibbonTab>Tools<KeyTip $top={20}>T</KeyTip></RibbonTab>
      <UnitTools>
        <svg width="24" height="24" viewBox="0 0 24 24" fontSize="10" fontFamily="Noto Sans, sans-serif" fill="#333">
          <text x="11" y="11">.0</text><text x="6" y="21">.00</text><path d="M4 7h7M4 7l3-2M4 7l3 2" stroke="#7a5a2a" fill="none" />
        </svg>
        <SelectBox $width={172} $height={24}>
          <select aria-label="Units" defaultValue="Kips & Inches"><option>Kips &amp; Inches</option></select>
          <svg width="7" height="5" viewBox="0 0 7 5"><path d="M0 0h7L4 5z" fill="#111" /></svg>
        </SelectBox>
        <Icon size={18}>{icons.help}</Icon>
      </UnitTools>
    </TabStrip>
    <RibbonBody>
      <Group $first>
        <GroupRow>
          <Big icon={icons.undo} label="Undo" width={55} caret />
          <Big icon={icons.redo} label="Redo" width={55} caret />
          <Big icon={icons.copy} label="Copy" width={55} />
          <Big icon={icons.paste} label="Paste" width={55} disabled />
          <Big icon={icons.delete} label="Delete" width={54} />
          <Big icon={clipExport} label={'Clipboard\nExport'} width={76} disabled />
          <Big icon={clipImport} label={'Clipboard\nImport'} width={76} disabled />
          <SmallStack $width={135}>
            <SmallButton disabled><Brush size={20} color={tan} />Format Painter</SmallButton>
            <SmallButton><Binoculars size={20} color="#5d4218" fill="#8a6528" />Find</SmallButton>
            <SmallButton><Icon size={20}>{icons.invert}</Icon>Invert Selection</SmallButton>
          </SmallStack>
        </GroupRow>
        <GroupCaption>Edit</GroupCaption>
      </Group>
      <Group>
        <GroupRow>
          <Big icon={icons.caseMgr} label={'Load Case\nManager'} width={76} />
          <Big icon={icons.editCase} label={'Edit Load\nCase'} width={76} disabled />
          <ResultCase>
            Result Case
            <SelectBox $filled $width={250} $height={31}>
              <select defaultValue="m1"><option value="m1">Mode Shape Set 1 Mode 1 (3.1229 Hz)</option></select>
              <ChevronDown size={12} color="#555" />
            </SelectBox>
          </ResultCase>
        </GroupRow>
        <GroupCaption>Load Cases</GroupCaption>
      </Group>
      <Group>
        <GroupRow>
          <Big icon={icons.zoomAll} label={'Zoom\nAll'} width={56} />
          <SmallStack $width={108}>
            <SmallButton><Icon size={20}>{icons.zoomIn}</Icon>Zoom In</SmallButton>
            <SmallButton><Icon size={20}>{icons.zoomOut}</Icon>Zoom Out</SmallButton>
            <SmallButton><Icon size={20}>{icons.zoomArea}</Icon>Zoom Area</SmallButton>
          </SmallStack>
          <Big icon={icons.rotateH} label={'Rotate\nHorizontal'} width={74} />
          <Big icon={icons.rotateV} label={'Rotate\nVertical'} width={62} />
          <Big icon={icons.cut} label={'Cut View from\nSelected'} width={104} />
          <Big icon={icons.picture} label={'Picture\nView'} width={58} on />
          <Big icon={icons.highlight} label={'Highlight\nView'} width={72} />
          <Big icon={icons.units} label={'Manage\nUnits'} width={66} />
        </GroupRow>
        <GroupCaption>View</GroupCaption>
      </Group>
      <Group>
        <GroupRow>
          <Big icon={icons.training} label="Training" width={64} />
          <Big icon={icons.faq} label={'FAQ\nAnswers'} width={60} />
          <Big icon={icons.support} label="Support" width={66} />
          <Big icon={icons.license} label="License" width={52} />
          <Big icon={icons.about} label="About" width={56} />
          <Big icon={icons.help} label="Help" width={54} />
        </GroupRow>
        <GroupCaption>iesweb.com</GroupCaption>
      </Group>
    </RibbonBody>
  </>
)

const DockHeader = ({ title }) => (
  <PanelHeader>
    {title}
    <Grip />
    <Caret $size={4} $color="#555" />
    <Pin size={13} color="#444" />
  </PanelHeader>
)

const ProjectManager = () => (
  <SidePanel>
    <DockHeader title="Project Manager" />
    <SideTabs $height={32}>
      <PanelTab $active $pad={8} $size={16}>Results</PanelTab>
      <PanelTab $pad={6} $size={16}>Results Filter</PanelTab>
      <PanelTab $pad={7} $size={16}>Cut</PanelTab>
    </SideTabs>
    <Sections>
      <SectionTitle><Caret $size={5} $color="#1e88e5" />Results</SectionTitle>
      <CaseRow>
        <span>Results</span>
        <CaseSelect>
          <select defaultValue="Case Summary"><option>Case Summary</option></select>
          <DropBox><Caret $size={4} $color="#1c1c78" /></DropBox>
        </CaseSelect>
      </CaseRow>
      <SectionTitle><Caret $size={5} $color="#1e88e5" />Modal Results</SectionTitle>
      {properties.map(([name, value]) => (
        <PropertyRow key={name}>
          <span>{name}</span>
          <input readOnly value={value} />
        </PropertyRow>
      ))}
    </Sections>
  </SidePanel>
)

const ResultLegend = () => (
  <Legend>
    <LegendRow>
      <Range>
        <svg width="22" height="14" viewBox="0 0 22 14"><path d="M0 2h22M0 7h22M0 12h22" stroke="#222" strokeWidth="3" /></svg>
        -3.87
      </Range>
      <span>Members : DY, displacement [in]</span>
      <span>0.093</span>
    </LegendRow>
    <LegendBar><i /><div /><i /></LegendBar>
    <LegendRow $ticks>
      <span>-3.87</span><span>-2.88</span><span>-1.89</span><span>-0.898</span><span>0.093</span>
    </LegendRow>
  </Legend>
)

const FindTool = () => (
  <FindPanel>
    <FindBox>
      <DockHeader title="Find Tool" />
      <SideTabs $height={27}>
        <PanelTab $active $pad={9} $size={14}>Modal Results/Participation</PanelTab>
        <PanelTab $pad={6} $size={14}>Node Results</PanelTab>
      </SideTabs>
      <GridFrame>
        <ModeTable>
          <thead>
            <tr>{columns.map(c => <th key={c} scope="col">{c}</th>)}<th /><th /></tr>
          </thead>
        </ModeTable>
      </GridFrame>
    </FindBox>
    <BottomTab $active>Find Tool</BottomTab>
    <BottomTab>Script</BottomTab>
  </FindPanel>
)

const App = () => {
  const [active, setActive] = useState('Result View')

  return (
    <Window>
      <GlobalStyle />
      <Title />
      <Ribbon />
      <Workspace>
        <ProjectManager />
        <DocColumn>
          <DocTabs>
            {docTabs.map(([name, icon], i) => (
              <DocTab key={name} $first={i === 0} $active={name === active} onClick={() => setActive(name)}>
                <Icon size={26}>{icon}</Icon>{name}
              </DocTab>
            ))}
          </DocTabs>
          <Viewport>
            <Model />
            <ViewCube />
            <ResultLegend />
            <StatusButton>
              <RoundIcon><ChevronDown size={15} strokeWidth={3} /></RoundIcon>
              Status
            </StatusButton>
          </Viewport>
          <FindTool />
        </DocColumn>
      </Workspace>
      <StatusBar>Ready</StatusBar>
    </Window>
  )
}

export default App
